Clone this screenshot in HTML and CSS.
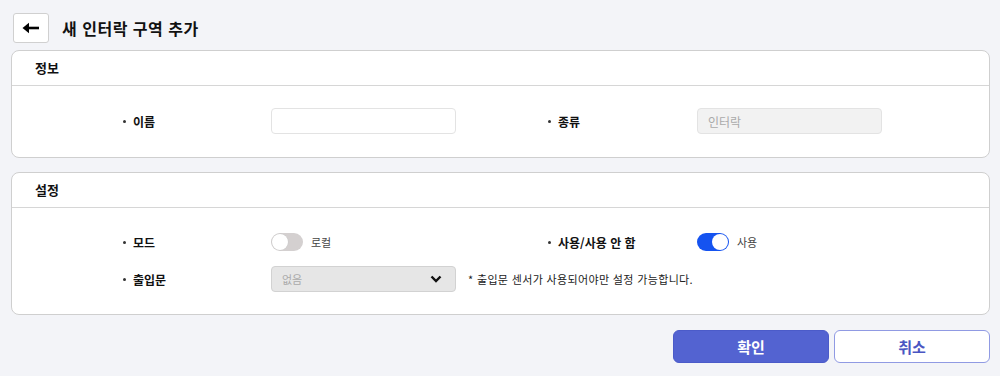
FILE: index.html
```html
<!DOCTYPE html>
<html lang="ko">
<head>
    <meta charset="UTF-8">
    <meta name="viewport" content="width=device-width, initial-scale=1.0">
    <title>새 인터락 구역 추가</title>
    <link rel="stylesheet" href="styles.css">
</head>
<body>
    <div class="page">
        <div class="top-bar">
            <button type="button" class="back-btn" aria-label="뒤로">
                <svg width="18" height="12" viewBox="0 0 18 12">
                    <path d="M17 6H4" stroke="#000" stroke-width="2.6" fill="none"/>
                    <path d="M0.5 6L7 0.8V11.2Z" fill="#000"/>
                </svg>
            </button>
            <h1>새 인터락 구역 추가</h1>
        </div>

        <div class="card">
            <div class="card-header">정보</div>
            <div class="card-body">
                <div class="field-label">이름</div>
                <div class="field"><input type="text" class="text-input"></div>
                <div class="field-label">종류</div>
                <div class="field"><input type="text" class="text-input" value="인터락" disabled></div>
            </div>
        </div>

        <div class="card">
            <div class="card-header">설정</div>
            <div class="card-body settings">
                <div class="field-label">모드</div>
                <div class="field">
                    <span class="toggle"><span class="knob"></span></span>
                    <span class="toggle-text">로컬</span>
                </div>
                <div class="field-label">사용/사용 안 함</div>
                <div class="field">
                    <span class="toggle on"><span class="knob"></span></span>
                    <span class="toggle-text">사용</span>
                </div>

                <div class="field-label">출입문</div>
                <div class="field wide">
                    <div class="select">
                        <span>없음</span>
                        <svg width="12" height="8" viewBox="0 0 12 8">
                            <path d="M1.5 1.5L6 6L10.5 1.5" stroke="#111" stroke-width="2.4" fill="none"/>
                        </svg>
                    </div>
                    <span class="note">* 출입문 센서가 사용되어야만 설정 가능합니다.</span>
                </div>
            </div>
        </div>

        <div class="actions">
            <button type="button" class="btn primary">확인</button>
            <button type="button" class="btn secondary">취소</button>
        </div>
    </div>
</body>
</html>
```

FILE: styles.css
```css
body {
    font-family: "Noto Sans CJK KR", "Noto Sans", sans-serif;
    background-color: #f3f4f8;
    margin: 0;
    padding: 0;
    color: #111;
}
.page {
    padding: 13px 10px 0 11px;
}
.top-bar {
    display: flex;
    align-items: center;
    gap: 13px;
    margin-left: 2px;
    height: 30px;
}
.back-btn {
    width: 36px;
    height: 30px;
    background-color: #fff;
    border: 1px solid #d0d0d0;
    border-radius: 3px;
    display: flex;
    align-items: center;
    justify-content: center;
    padding: 0;
}
h1 {
    margin: 0;
    font-size: 16px;
    font-weight: 700;
    letter-spacing: 0.5px;
}
.card {
    background-color: #fff;
    border: 1.5px solid #cfcfcf;
    border-radius: 8px;
    margin-top: 7px;
}
.card + .card {
    margin-top: 14px;
}
.card-header {
    height: 34px;
    line-height: 34px;
    padding-left: 23px;
    font-size: 13px;
    font-weight: 700;
    border-bottom: 1.5px solid #d6d6d6;
}
.card-body {
    display: grid;
    grid-template-columns: 148px 277px 149px 1fr;
    grid-auto-rows: 26px;
    row-gap: 12px;
    padding: 22px 0 23px 111px;
}
.card-body.settings {
    padding: 21px 0 22px 111px;
    row-gap: 11px;
}
.field-label {
    display: flex;
    align-items: center;
    font-size: 12px;
    font-weight: 700;
}
.field-label::before {
    content: "";
    width: 3px;
    height: 3px;
    border-radius: 50%;
    background-color: #333;
    margin-right: 7px;
}
.field {
    display: flex;
    align-items: center;
}
.field.wide {
    grid-column: 2 / 5;
}
.text-input {
    width: 185px;
    height: 26px;
    box-sizing: border-box;
    border: 1px solid #e3e3e3;
    border-radius: 4px;
    padding: 0 10px;
    font-family: inherit;
    font-size: 12px;
    background-color: #fff;
}
.text-input:disabled {
    background-color: #f2f2f2;
    color: #aaa;
}
.toggle {
    position: relative;
    width: 32px;
    height: 18px;
    border-radius: 9px;
    background-color: #d4d0d0;
}
.toggle .knob {
    position: absolute;
    top: 1px;
    left: 1px;
    width: 16px;
    height: 16px;
    border-radius: 50%;
    background-color: #fff;
    box-shadow: 0 0 0 0.5px #c8c8c8;
}
.toggle.on {
    background-color: #1553f0;
}
.toggle.on .knob {
    left: 15px;
    box-shadow: none;
}
.toggle-text {
    font-size: 11px;
    color: #444;
    margin-left: 8px;
}
.select {
    width: 185px;
    height: 26px;
    box-sizing: border-box;
    border: 1px solid #d2d2d2;
    border-radius: 4px;
    background-color: #e6e6e6;
    display: flex;
    align-items: center;
    justify-content: space-between;
    padding: 0 13px 0 10px;
    font-size: 11px;
    color: #aaa;
}
.note {
    font-size: 11px;
    letter-spacing: 0.35px;
    color: #222;
    margin-left: 12px;
}
.actions {
    display: flex;
    justify-content: flex-end;
    gap: 5px;
    margin-top: 15px;
}
.btn {
    width: 156px;
    height: 33px;
    border-radius: 6px;
    font-family: inherit;
    font-size: 15px;
    font-weight: 700;
    cursor: pointer;
}
.primary {
    background-color: #5363d1;
    border: 1px solid #4b5bc9;
    color: #fff;
}
.secondary {
    background-color: #fff;
    border: 1.5px solid #909ae3;
    color: #4a55c2;
}
```
